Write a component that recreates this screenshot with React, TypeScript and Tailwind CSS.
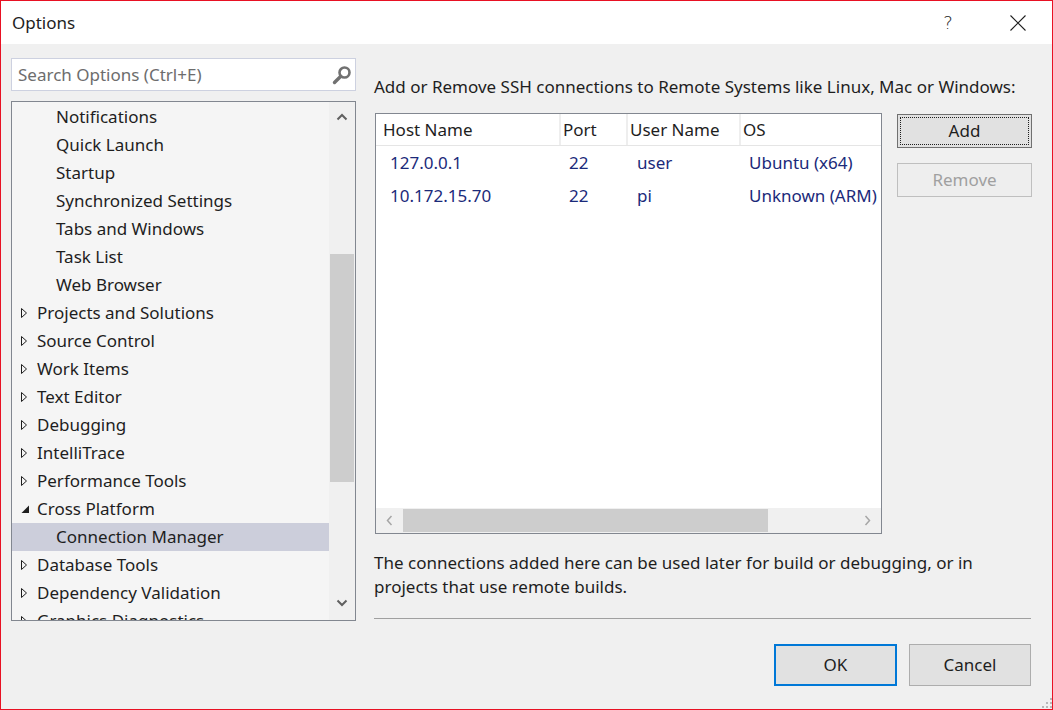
import React from "react"

const font = "font-['Noto_Sans',sans-serif]"

type TreeItem = { label: string; level: 0 | 1; state?: "closed" | "open"; selected?: boolean }

const treeItems: TreeItem[] = [
  { label: "Notifications", level: 1 },
  { label: "Quick Launch", level: 1 },
  { label: "Startup", level: 1 },
  { label: "Synchronized Settings", level: 1 },
  { label: "Tabs and Windows", level: 1 },
  { label: "Task List", level: 1 },
  { label: "Web Browser", level: 1 },
  { label: "Projects and Solutions", level: 0, state: "closed" },
  { label: "Source Control", level: 0, state: "closed" },
  { label: "Work Items", level: 0, state: "closed" },
  { label: "Text Editor", level: 0, state: "closed" },
  { label: "Debugging", level: 0, state: "closed" },
  { label: "IntelliTrace", level: 0, state: "closed" },
  { label: "Performance Tools", level: 0, state: "closed" },
  { label: "Cross Platform", level: 0, state: "open" },
  { label: "Connection Manager", level: 1, selected: true },
  { label: "Database Tools", level: 0, state: "closed" },
  { label: "Dependency Validation", level: 0, state: "closed" },
  { label: "Graphics Diagnostics", level: 0, state: "closed" },
]

const connections = [
  { host: "127.0.0.1", port: "22", user: "user", os: "Ubuntu (x64)" },
  { host: "10.172.15.70", port: "22", user: "pi", os: "Unknown (ARM)" },
]

function Expander({ state }: { state?: "closed" | "open" }) {
  if (state === "open") {
    return (
      <svg width="9" height="9" viewBox="0 0 9 9" className="shrink-0">
        <polygon points="8,0.5 8,8 0.5,8" fill="#1e1e1e" />
      </svg>
    )
  }
  return (
    <svg width="7" height="10" viewBox="0 0 7 10" className="shrink-0">
      <polygon points="0.5,0.5 5.5,5 0.5,9.5" fill="none" stroke="#1e1e1e" strokeWidth="1" />
    </svg>
  )
}

function OptionsTree() {
  return (
    <div className="mt-[10px] h-[520px] border border-[#828790] bg-[#f5f5f5] flex overflow-hidden">
      <div className="flex-1 pt-[1px] overflow-hidden">
        {treeItems.map((item) => (
          <div
            key={item.label}
            className={`h-[28px] flex items-center whitespace-nowrap text-[17px] text-[#1e1e1e] ${
              item.selected ? "bg-[#cccedb]" : ""
            } ${item.level === 1 ? "pl-[44px]" : "pl-[9px]"}`}
          >
            {item.level === 0 && (
              <span className="w-[16px] flex items-center justify-start">
                <Expander state={item.state} />
              </span>
            )}
            <span>{item.label}</span>
          </div>
        ))}
      </div>
      <div className="w-[26px] bg-[#f0f0f0] flex flex-col items-center">
        <div className="h-[30px] w-full flex items-center justify-center">
          <svg width="12" height="8" viewBox="0 0 12 8">
            <path d="M1.5 6.5 L6 2 L10.5 6.5" fill="none" stroke="#606060" strokeWidth="2" />
          </svg>
        </div>
        <div className="mt-[122px] h-[228px] w-[24px] bg-[#cdcdcd]" />
        <div className="flex-1" />
        <div className="h-[30px] w-full flex items-center justify-center mb-[2px]">
          <svg width="12" height="8" viewBox="0 0 12 8">
            <path d="M1.5 1.5 L6 6 L10.5 1.5" fill="none" stroke="#606060" strokeWidth="2" />
          </svg>
        </div>
      </div>
    </div>
  )
}

function ConnectionList() {
  return (
    <div className="w-[507px] h-[421px] border border-[#828790] bg-white flex flex-col overflow-hidden">
      <div className="flex-1 overflow-hidden">
        <div className="w-[640px]">
          <div className="h-[32px] flex items-center border-b border-[#e5e5e5] text-[17px] text-[#1e1e1e]">
            <div className="w-[185px] pl-[7px] h-full flex items-center border-r-2 border-[#eeeeee]">Host Name</div>
            <div className="w-[67px] pl-[2px] h-full flex items-center border-r-2 border-[#eeeeee]">Port</div>
            <div className="w-[113px] pl-[2px] h-full flex items-center border-r-2 border-[#eeeeee]">User Name</div>
            <div className="flex-1 pl-[2px] h-full flex items-center">OS</div>
          </div>
          <div>
            {connections.map((c) => (
              <div key={c.host} className="h-[33px] flex items-center text-[17px] text-[#1b2a7a]">
                <div className="w-[185px] pl-[14px]">{c.host}</div>
                <div className="w-[67px] pl-[8px]">{c.port}</div>
                <div className="w-[113px] pl-[9px]">{c.user}</div>
                <div className="flex-1 pl-[8px]">{c.os}</div>
              </div>
            ))}
          </div>
        </div>
      </div>
      <div className="h-[25px] bg-[#f0f0f0] flex items-stretch">
        <div className="w-[27px] flex items-center justify-center">
          <svg width="7" height="11" viewBox="0 0 7 11">
            <path d="M5.5 1 L1.5 5.5 L5.5 10" fill="none" stroke="#a6a6a6" strokeWidth="1.5" />
          </svg>
        </div>
        <div className="w-[365px] my-[1px] bg-[#cdcdcd]" />
        <div className="flex-1" />
        <div className="w-[27px] flex items-center justify-center">
          <svg width="7" height="11" viewBox="0 0 7 11">
            <path d="M1.5 1 L5.5 5.5 L1.5 10" fill="none" stroke="#a6a6a6" strokeWidth="1.5" />
          </svg>
        </div>
      </div>
    </div>
  )
}

export default function App() {
  return (
    <div className={`w-[1053px] h-[710px] border border-[#e81123] bg-[#f0f0f0] flex flex-col ${font}`}>
      <div className="h-[43px] bg-white flex items-center pl-[11px] text-[17px] text-[#1e1e1e]">
        <span>Options</span>
        <div className="flex-1" />
        <span className="w-[20px] text-center text-[18px] font-['DejaVu_Sans',sans-serif] font-light mr-[52px]">?</span>
        <svg width="16" height="16" viewBox="0 0 16 16" className="mr-[26px]">
          <path d="M0.5 0.5 L15.5 15.5 M15.5 0.5 L0.5 15.5" stroke="#1e1e1e" strokeWidth="1.1" />
        </svg>
      </div>

      <div className="flex flex-1">
        <div className="w-[345px] ml-[10px] pt-[14px] flex flex-col">
          <div className="h-[33px] border border-[#cdd1e0] bg-white flex items-center pl-[6px] pr-[3px]">
            <span className="flex-1 text-[17px] text-[#6d6d6d]">Search Options (Ctrl+E)</span>
            <svg width="20" height="20" viewBox="0 0 20 20">
              <circle cx="12.5" cy="7.5" r="5" fill="none" stroke="#717171" strokeWidth="2.6" />
              <path d="M8.8 11.2 L2.5 17.5" stroke="#717171" strokeWidth="3.4" strokeLinecap="round" />
            </svg>
          </div>
          <OptionsTree />
        </div>

        <div className="ml-[18px] w-[658px] flex flex-col">
          <div className="mt-[31px] h-[24px] leading-[24px] text-[17px] text-[#1e1e1e] whitespace-nowrap">
            Add or Remove SSH connections to Remote Systems like Linux, Mac or Windows:
          </div>
          <div className="mt-[14px] flex">
            <div className="ml-[1px]">
              <ConnectionList />
            </div>
            <div className="ml-[15px] w-[135px] flex flex-col gap-[15px] pt-[1px]">
              <button className="h-[34px] border border-[#707070] bg-[#e1e1e1] p-[2px] text-[17px] text-[#1e1e1e]">
                <div className="h-full w-full border border-dotted border-[#1e1e1e] flex items-center justify-center">
                  Add
                </div>
              </button>
              <button className="h-[34px] border border-[#bfbfbf] bg-[#eeeeee] text-[17px] text-[#a0a0a0]">
                Remove
              </button>
            </div>
          </div>
          <p className="mt-[17px] leading-[24px] text-[17px] text-[#1e1e1e] pr-[40px]">
            The connections added here can be used later for build or debugging, or in projects that use remote builds.
          </p>
          <div className="mt-[19px] h-px bg-[#a0a0a0] w-[657px]" />
          <div className="mt-[25px] flex justify-end gap-[12px] pr-[1px]">
            <button className="w-[123px] h-[42px] border-2 border-[#0078d7] bg-[#e1e1e1] text-[17px] text-[#1e1e1e]">
              OK
            </button>
            <button className="w-[122px] h-[42px] border border-[#adadad] bg-[#e1e1e1] text-[17px] text-[#1e1e1e]">
              Cancel
            </button>
          </div>
          <div className="flex-1 flex items-end justify-end -mr-[20px] pb-[1px]">
            <svg width="10" height="10" viewBox="0 0 10 10">
              <rect x="8" y="0" width="2" height="2" fill="#b8b8b8" />
              <rect x="4" y="4" width="2" height="2" fill="#b8b8b8" />
              <rect x="8" y="4" width="2" height="2" fill="#b8b8b8" />
              <rect x="0" y="8" width="2" height="2" fill="#b8b8b8" />
              <rect x="4" y="8" width="2" height="2" fill="#b8b8b8" />
              <rect x="8" y="8" width="2" height="2" fill="#b8b8b8" />
            </svg>
          </div>
        </div>
      </div>
    </div>
  )
}
